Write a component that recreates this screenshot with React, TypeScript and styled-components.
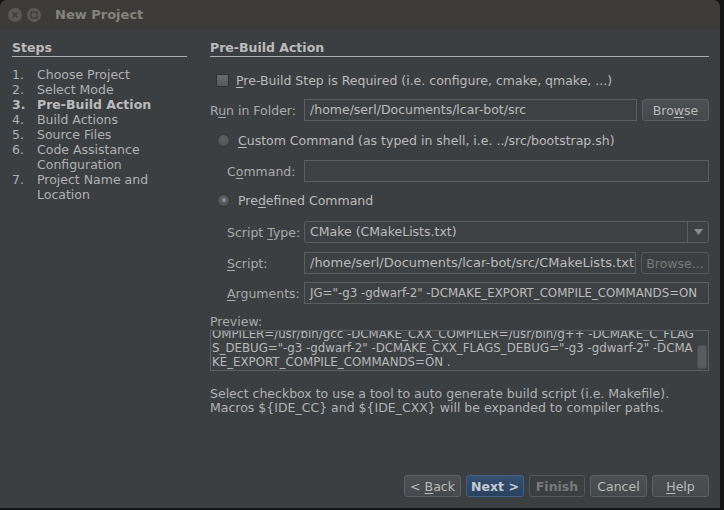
import styled, { createGlobalStyle } from 'styled-components'

const GlobalStyle = createGlobalStyle`
  html, body {
    margin: 0;
    padding: 0;
    background: #151515;
  }
  body {
    font-family: "DejaVu Sans", "Liberation Sans", sans-serif;
    font-size: 12.5px;
    color: #bbbbbb;
  }
`

const steps = [
  { n: '1.', label: 'Choose Project' },
  { n: '2.', label: 'Select Mode' },
  { n: '3.', label: 'Pre-Build Action', active: true },
  { n: '4.', label: 'Build Actions' },
  { n: '5.', label: 'Source Files' },
  { n: '6.', label: 'Code Assistance Configuration' },
  { n: '7.', label: 'Project Name and Location' },
]

const previewLines = [
  'OMPILER=/usr/bin/gcc -DCMAKE_CXX_COMPILER=/usr/bin/g++ -DCMAKE_C_FLAG',
  'S_DEBUG="-g3 -gdwarf-2" -DCMAKE_CXX_FLAGS_DEBUG="-g3 -gdwarf-2" -DCMA',
  'KE_EXPORT_COMPILE_COMMANDS=ON .',
]

function App() {
  return (
    <>
      <GlobalStyle />
      <Window>
        <TitleBar>
          <WinButton>
            <svg width="8" height="8" viewBox="0 0 8 8">
              <path d="M1.5 1.5 L6.5 6.5 M6.5 1.5 L1.5 6.5" stroke="#3c3b37" strokeWidth="1.4" />
            </svg>
          </WinButton>
          <WinButton>
            <svg width="8" height="8" viewBox="0 0 8 8">
              <rect x="1" y="1" width="6" height="6" fill="none" stroke="#3c3b37" strokeWidth="1.2" />
            </svg>
          </WinButton>
          <Title>New Project</Title>
        </TitleBar>

        <Body>
          <Content>
            <Sidebar>
              <Heading>Steps</Heading>
              <StepList>
                {steps.map((s) => (
                  <Step key={s.n} $active={s.active}>
                    <StepNum>{s.n}</StepNum>
                    <span>{s.label}</span>
                  </Step>
                ))}
              </StepList>
            </Sidebar>

            <Main>
              <Heading>Pre-Build Action</Heading>

              <CheckRow>
                <Checkbox />
                <span>
                  <U>P</U>re-Build Step is Required (i.e. configure, cmake, qmake, ...)
                </span>
              </CheckRow>

              <FormRow $indent={0} $mt={12}>
                <Label $w={89}>
                  R<U>u</U>n in Folder:
                </Label>
                <Field>/home/serl/Documents/lcar-bot/src</Field>
                <Button $w={65}>
                  <span>
                    Bro<U>w</U>se
                  </span>
                </Button>
              </FormRow>

              <RadioRow $mt={12}>
                <Radio />
                <span>
                  <U>C</U>ustom Command (as typed in shell, i.e. ../src/bootstrap.sh)
                </span>
              </RadioRow>

              <FormRow $indent={17} $mt={13}>
                <Label>
                  C<U>o</U>mmand:
                </Label>
                <Field />
              </FormRow>

              <RadioRow $mt={11}>
                <Radio $checked />
                <span>
                  Pre<U>d</U>efined Command
                </span>
              </RadioRow>

              <FormRow $indent={17} $mt={14}>
                <Label>
                  Script <U>T</U>ype:
                </Label>
                <Select>
                  <SelectText>CMake (CMakeLists.txt)</SelectText>
                  <SelectArrow>
                    <svg width="9" height="6" viewBox="0 0 9 6">
                      <path d="M0 0 H9 L4.5 6 Z" fill="#8a8d8f" />
                    </svg>
                  </SelectArrow>
                </Select>
              </FormRow>

              <FormRow $indent={17} $mt={9}>
                <Label>
                  <U>S</U>cript:
                </Label>
                <Field $size={13}>/home/serl/Documents/lcar-bot/src/CMakeLists.txt</Field>
                <Button $w={66} $disabled>
                  Browse...
                </Button>
              </FormRow>

              <FormRow $indent={17} $mt={8}>
                <Label>
                  <U>A</U>rguments:
                </Label>
                <Field $size={11.8}>JG="-g3 -gdwarf-2" -DCMAKE_EXPORT_COMPILE_COMMANDS=ON</Field>
              </FormRow>

              <PreviewLabel>Preview:</PreviewLabel>
              <Preview>
                <PreviewText>
                  {previewLines.map((l) => (
                    <div key={l}>{l}</div>
                  ))}
                </PreviewText>
                <ScrollTrack>
                  <ScrollThumb />
                </ScrollTrack>
              </Preview>

              <Help>
                Select checkbox to use a tool to auto generate build script (i.e. Makefile).
                <br />
                Macros ${'{'}IDE_CC{'}'} and ${'{'}IDE_CXX{'}'} will be expanded to compiler paths.
              </Help>
            </Main>
          </Content>

          <Footer>
            <Button $w={55}>
              <span>
                &lt; <U>B</U>ack
              </span>
            </Button>
            <Button $w={56} $primary>
              Next &gt;
            </Button>
            <Button $w={54} $disabled $bold>
              Finish
            </Button>
            <Button $w={55}>Cancel</Button>
            <Button $w={55}>
              <span>
                <U>H</U>elp
              </span>
            </Button>
          </Footer>
        </Body>
      </Window>
    </>
  )
}

const Window = styled.div`
  width: 720px;
  height: 508px;
  border-radius: 7px 7px 0 0;
  overflow: hidden;
  background: #3c3f41;
  display: flex;
  flex-direction: column;
`

const TitleBar = styled.div`
  height: 29px;
  flex: none;
  background: #3c3b37;
  display: flex;
  align-items: center;
  padding-left: 8px;
  gap: 5px;
`

const WinButton = styled.div`
  width: 14px;
  height: 14px;
  border-radius: 50%;
  background: #5a5955;
  display: flex;
  align-items: center;
  justify-content: center;
`

const Title = styled.div`
  margin-left: 9px;
  font-family: "DejaVu Sans", sans-serif;
  font-weight: bold;
  font-size: 13px;
  color: #85837e;
`

const Body = styled.div`
  flex: 1;
  min-height: 0;
  display: flex;
  flex-direction: column;
`

const Content = styled.div`
  flex: 1;
  display: flex;
  padding: 11px 11px 0 12px;
`

const Sidebar = styled.div`
  width: 175px;
  flex: none;
`

const Main = styled.div`
  margin-left: 23px;
  flex: 1;
  min-width: 0;
  display: flex;
  flex-direction: column;
`

const Heading = styled.div`
  font-weight: bold;
  font-size: 12.5px;
  line-height: 15px;
  padding-bottom: 1px;
  border-bottom: 1px solid #a9abac;
`

const StepList = styled.div`
  margin-top: 10px;
  display: flex;
  flex-direction: column;
`

const Step = styled.div<{ $active?: boolean }>`
  display: flex;
  line-height: 15px;
  font-weight: ${(p) => (p.$active ? 'bold' : 'normal')};
  color: ${(p) => (p.$active ? '#bbbbbb' : '#b0b2b3')};
`

const StepNum = styled.span`
  width: 25px;
  flex: none;
`

const U = styled.span`
  text-decoration: underline;
  text-underline-offset: 2px;
`

const CheckRow = styled.div`
  display: flex;
  align-items: center;
  gap: 7px;
  margin: 16px 0 0 6px;
  height: 14px;
`

const Checkbox = styled.div`
  width: 11px;
  height: 11px;
  border-radius: 2px;
  background: linear-gradient(#6a6c6e, #55585a);
  border: 1px solid #2f3132;
`

const RadioRow = styled.div<{ $mt: number }>`
  display: flex;
  align-items: center;
  gap: 8px;
  margin: ${(p) => p.$mt}px 0 0 7px;
  height: 14px;
`

const Radio = styled.div<{ $checked?: boolean }>`
  width: 11px;
  height: 11px;
  border-radius: 50%;
  background: radial-gradient(circle at 50% 40%, #5e6163, #4c4f51);
  border: 1px solid #333536;
  display: flex;
  align-items: center;
  justify-content: center;
  &::after {
    content: '';
    display: ${(p) => (p.$checked ? 'block' : 'none')};
    width: 4px;
    height: 4px;
    border-radius: 50%;
    background: #8a8c8e;
  }
`

const FormRow = styled.div<{ $indent: number; $mt: number }>`
  display: flex;
  align-items: center;
  gap: 5px;
  height: 22px;
  margin-top: ${(p) => p.$mt}px;
  padding-left: ${(p) => p.$indent}px;
`

const Label = styled.div<{ $w?: number }>`
  width: ${(p) => p.$w ?? 72}px;
  flex: none;
  color: #a9abac;
  white-space: nowrap;
`

const Field = styled.div<{ $size?: number }>`
  flex: 1;
  min-width: 0;
  height: 20px;
  line-height: 20px;
  padding: 0 5px;
  border: 1px solid #5c5f61;
  background: #3e4143;
  color: #bbbbbb;
  font-size: ${(p) => p.$size ?? 12.5}px;
  white-space: nowrap;
  overflow: hidden;
`

const Select = styled.div`
  flex: 1;
  height: 20px;
  border: 1px solid #5c5f61;
  border-radius: 3px;
  background: #3e4143;
  display: flex;
`

const SelectText = styled.div`
  flex: 1;
  line-height: 20px;
  padding: 0 5px;
`

const SelectArrow = styled.div`
  width: 20px;
  border-left: 1px solid #5c5f61;
  display: flex;
  align-items: center;
  justify-content: center;
`

const Button = styled.div<{ $w: number; $primary?: boolean; $disabled?: boolean; $bold?: boolean }>`
  width: ${(p) => p.$w}px;
  height: 20px;
  flex: none;
  display: flex;
  align-items: center;
  justify-content: center;
  white-space: nowrap;
  border-radius: 3px;
  border: 1px solid ${(p) => (p.$primary ? '#40618a' : p.$disabled ? '#555859' : '#5e6163')};
  background: ${(p) =>
    p.$primary
      ? 'linear-gradient(#33506f, #2a4260)'
      : p.$disabled
        ? '#3c3f41'
        : 'linear-gradient(#4c5052, #45494b)'};
  color: ${(p) => (p.$disabled ? '#77797a' : p.$primary ? '#c4cbd2' : '#bbbbbb')};
  font-weight: ${(p) => (p.$primary || p.$bold ? 'bold' : 'normal')};
`

const PreviewLabel = styled.div`
  margin-top: 11px;
  line-height: 14px;
  color: #a9abac;
`

const Preview = styled.div`
  margin-top: 1px;
  height: 39px;
  border: 1px solid #5c5f61;
  background: #3e4143;
  display: flex;
  overflow: hidden;
`

const PreviewText = styled.div`
  flex: 1;
  min-width: 0;
  margin-top: -4px;
  padding-left: 1px;
  font-size: 11.8px;
  line-height: 14px;
  white-space: nowrap;
  overflow: hidden;
  color: #b6b8b9;
`

const ScrollTrack = styled.div`
  width: 13px;
  flex: none;
  display: flex;
  align-items: flex-end;
  justify-content: center;
  padding-bottom: 1px;
`

const ScrollThumb = styled.div`
  width: 8px;
  height: 22px;
  border-radius: 3px;
  background: #595c5e;
  border: 1px solid #4c4f51;
`

const Help = styled.div`
  margin-top: 16px;
  line-height: 14px;
  color: #b0b2b3;
`

const Footer = styled.div`
  display: flex;
  justify-content: flex-end;
  gap: 5px;
  padding: 0 11px 11px 0;
`

export default App
